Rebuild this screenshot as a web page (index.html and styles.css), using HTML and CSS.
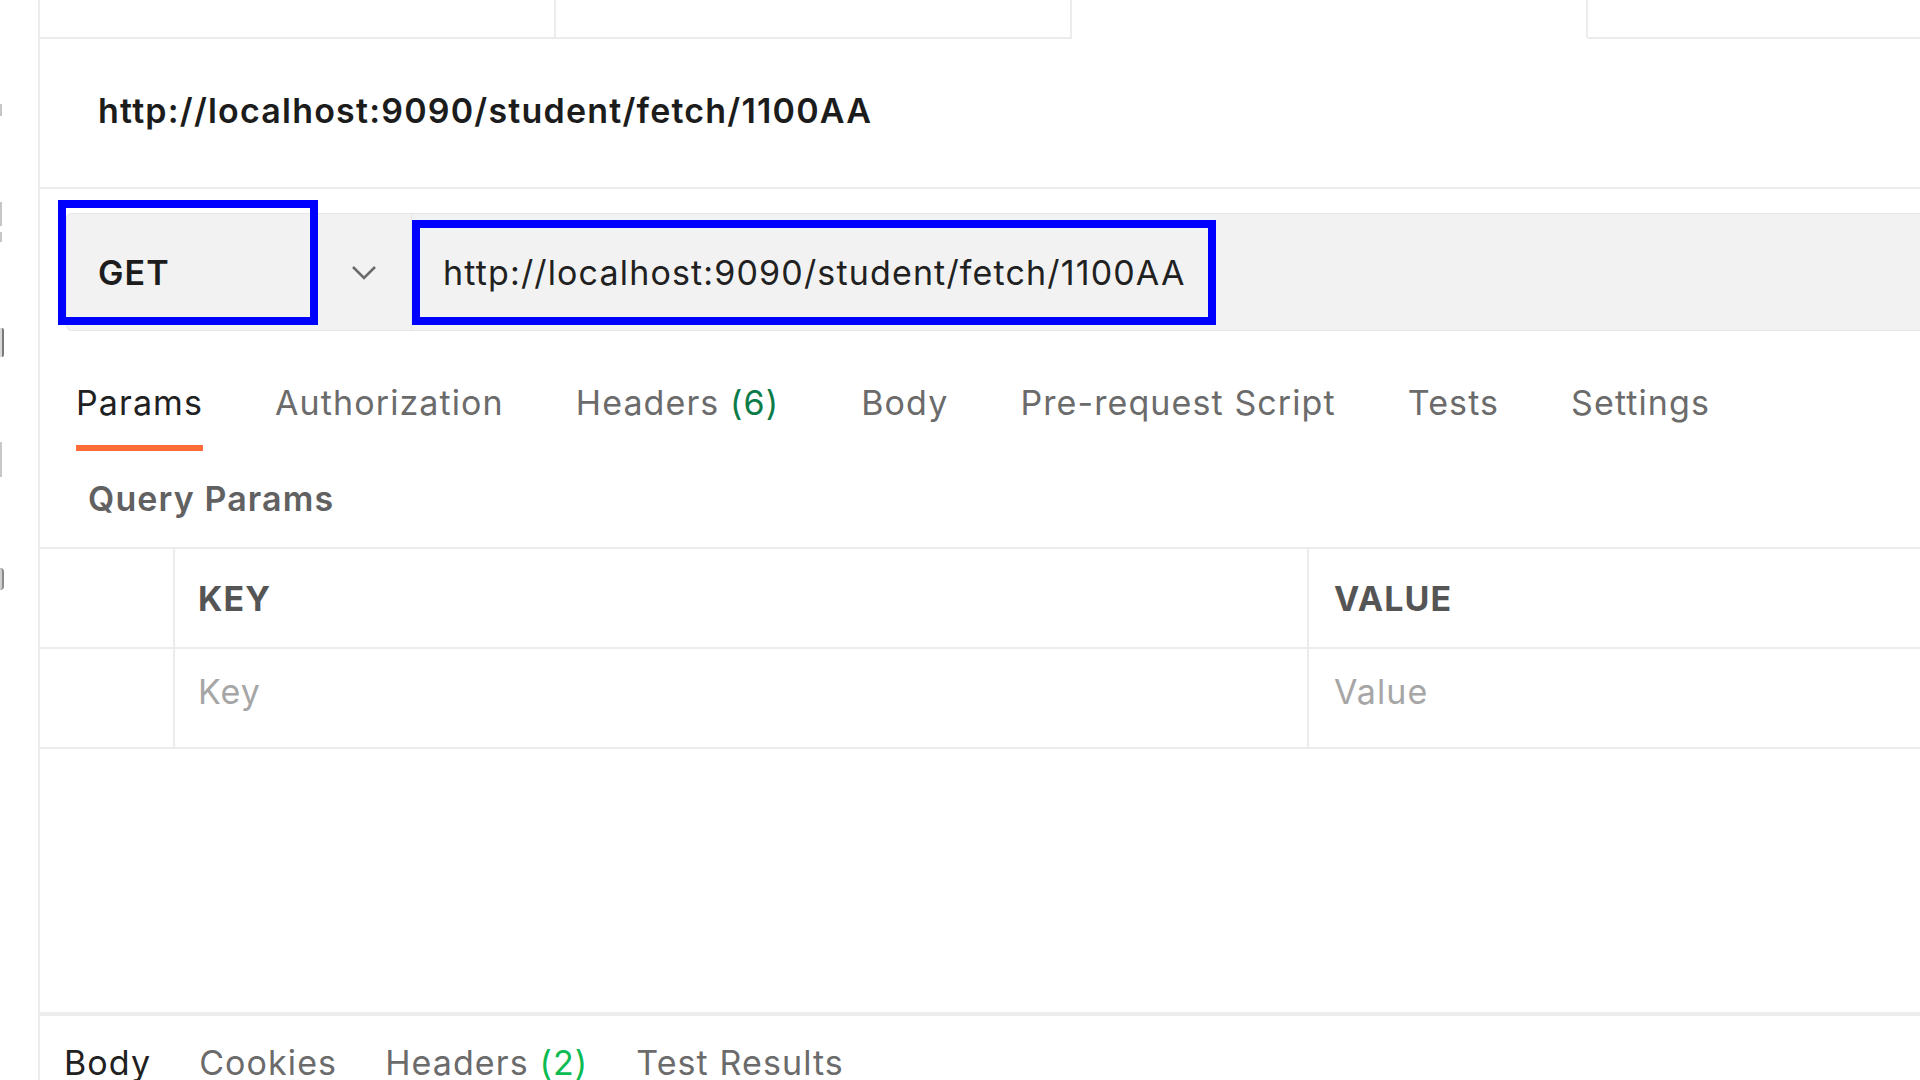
FILE: index.html
```html
<!DOCTYPE html>
<html lang="en">
<head>
<meta charset="utf-8">
<title>Postman request</title>
<link rel="stylesheet" href="styles.css">
</head>
<body>
<div class="app">
  <aside class="sidebar">
    <span class="mk mk1"></span>
    <span class="mk mk2"></span>
    <span class="mk mk3"></span>
    <span class="mk mk4"></span>
    <span class="mk mk5"></span>
    <span class="mk mk6"></span>
  </aside>
  <main class="main">
    <div class="doc-tabs">
      <div class="doc-tab"></div>
      <div class="doc-tab"></div>
      <div class="doc-tab active"></div>
      <div class="doc-tab last"></div>
    </div>
    <div class="title-bar">
      <h1 class="title">http://localhost:9090/student/fetch/1100AA</h1>
    </div>
    <div class="request-row">
      <div class="req-bar">
        <div class="method">
          <span class="method-name">GET</span>
          <svg class="chev" width="26" height="16" viewBox="0 0 26 16"><path d="M2 2 L13 13 L24 2" fill="none" stroke="#6b6b6b" stroke-width="2.6"/></svg>
        </div>
        <div class="url">http://localhost:9090/student/fetch/1100AA</div>
      </div>
      <div class="hl hl-method"></div>
      <div class="hl hl-url"></div>
    </div>
    <nav class="req-tabs">
      <span class="rt active">Params</span>
      <span class="rt">Authorization</span>
      <span class="rt rt-headers">Headers <span class="count">(6)</span></span>
      <span class="rt">Body</span>
      <span class="rt">Pre-request Script</span>
      <span class="rt">Tests</span>
      <span class="rt">Settings</span>
    </nav>
    <div class="qp-title">Query Params</div>
    <div class="params-table">
      <div class="prow head">
        <div class="cell c-check"></div>
        <div class="cell c-key">KEY</div>
        <div class="cell c-val">VALUE</div>
      </div>
      <div class="prow body-row">
        <div class="cell c-check"></div>
        <div class="cell c-key ph">Key</div>
        <div class="cell c-val ph">Value</div>
      </div>
    </div>
    <div class="spacer"></div>
    <nav class="resp-tabs">
      <span class="pt active">Body</span>
      <span class="pt">Cookies</span>
      <span class="pt">Headers <span class="count2">(2)</span></span>
      <span class="pt">Test Results</span>
    </nav>
  </main>
</div>
</body>
</html>
```
FILE: styles.css
```css
* { box-sizing: border-box; }
html, body { margin: 0; padding: 0; }
body {
  width: 1920px;
  height: 1080px;
  overflow: hidden;
  background: #ffffff;
  font-family: Inter, "Noto Sans", "Liberation Sans", sans-serif;
  color: #212121;
  letter-spacing: 1.1px;
}
.app { display: flex; height: 1080px; }

.sidebar {
  width: 40px;
  flex: none;
  border-right: 2px solid #ececec;
  display: flex;
  flex-direction: column;
  align-items: flex-start;
}
.mk { display: block; background: #c6c6c6; }
.mk1 { width: 2px; height: 12px; margin-top: 104px; }
.mk2 { width: 2px; height: 24px; margin-top: 86px; }
.mk3 { width: 2px; height: 10px; margin-top: 6px; }
.mk4 { width: 4px; height: 29px; margin-top: 86px; background: #d8d8d8; border-right: 2px solid #7a7a7a; border-radius: 0 2px 2px 0; }
.mk5 { width: 2px; height: 35px; margin-top: 85px; background: #c8c8c8; }
.mk6 { width: 4px; height: 22px; margin-top: 91px; background: #cfcfcf; border-right: 2px solid #8a8a8a; border-radius: 0 4px 4px 0; }

.main { flex: 1; display: flex; flex-direction: column; min-width: 0; }

.doc-tabs { display: flex; height: 39px; flex: none; }
.doc-tab {
  width: 516px;
  flex: none;
  border-right: 2px solid #ececec;
  border-bottom: 2px solid #ececec;
}
.doc-tab.active { border-bottom-color: transparent; }
.doc-tab.last { flex: 1; border-right: none; }

.title-bar {
  height: 150px;
  flex: none;
  border-bottom: 2px solid #ececec;
  display: flex;
  align-items: center;
  padding-left: 58px;
}
.title {
  margin: 0;
  font-size: 34px;
  font-weight: 600;
  color: #1c1c1c;
  line-height: 40px;
  letter-spacing: 1.2px;
  position: relative;
  top: -2px;
}

.request-row {
  position: relative;
  flex: none;
  padding: 24px 0 0 26px;
}
.req-bar {
  display: flex;
  height: 118px;
  background: #f2f2f2;
  border: 1px solid #e6e6e6;
  border-right: none;
  border-radius: 6px 0 0 6px;
}
.method {
  width: 345px;
  flex: none;
  display: flex;
  align-items: center;
  justify-content: space-between;
  padding: 0 34px 0 31px;
  border-right: 1px solid #e6e6e6;
}
.method-name { font-size: 34px; font-weight: 600; color: #1c1c1c; }
.chev { display: block; margin-top: 2px; }
.url {
  display: flex;
  align-items: center;
  padding-left: 31px;
  font-size: 34px;
  font-weight: 400;
  color: #212121;
  letter-spacing: 1.15px;
}
.hl {
  position: absolute;
  border: 8px solid #0000ff;
}
.hl-method { left: 18px; top: 11px; width: 260px; height: 125px; }
.hl-url { left: 372px; top: 31px; width: 804px; height: 105px; }

.req-tabs {
  display: flex;
  flex: none;
  gap: 72px;
  padding-left: 36px;
  margin-top: 52px;
}
.rt {
  font-size: 34px;
  line-height: 40px;
  color: #6b6b6b;
  padding-bottom: 22px;
  border-bottom: 6px solid transparent;
  white-space: nowrap;
}
.rt.active { color: #212121; border-bottom-color: #ff6c37; }
.rt-headers { margin-right: 10px; }
.count { color: #0b7c48; }

.qp-title {
  flex: none;
  margin-top: 28px;
  padding-left: 48px;
  font-size: 34px;
  line-height: 40px;
  font-weight: 600;
  color: #616161;
}

.params-table {
  flex: none;
  margin-top: 28px;
  border-top: 2px solid #ececec;
}
.prow {
  display: flex;
  height: 100px;
  border-bottom: 2px solid #ececec;
}
.cell {
  display: flex;
  align-items: center;
  font-size: 34px;
}
.body-row .cell { padding-bottom: 14px; }
.c-check { width: 135px; flex: none; border-right: 2px solid #ececec; }
.c-key { width: 1134px; flex: none; padding-left: 23px; border-right: 2px solid #ececec; }
.c-val { flex: 1; padding-left: 25px; }
.head .cell { font-weight: 700; color: #555555; }
.ph { color: #a6a6a6; }

.spacer { flex: 1; }

.resp-tabs {
  flex: none;
  height: 68px;
  border-top: 4px solid #ececec;
  display: flex;
  gap: 48px;
  padding-left: 24px;
  padding-top: 27px;
}
.pt {
  font-size: 34px;
  line-height: 40px;
  color: #6b6b6b;
  white-space: nowrap;
}
.pt.active { color: #212121; }
.count2 { color: #0cbb52; }
```
